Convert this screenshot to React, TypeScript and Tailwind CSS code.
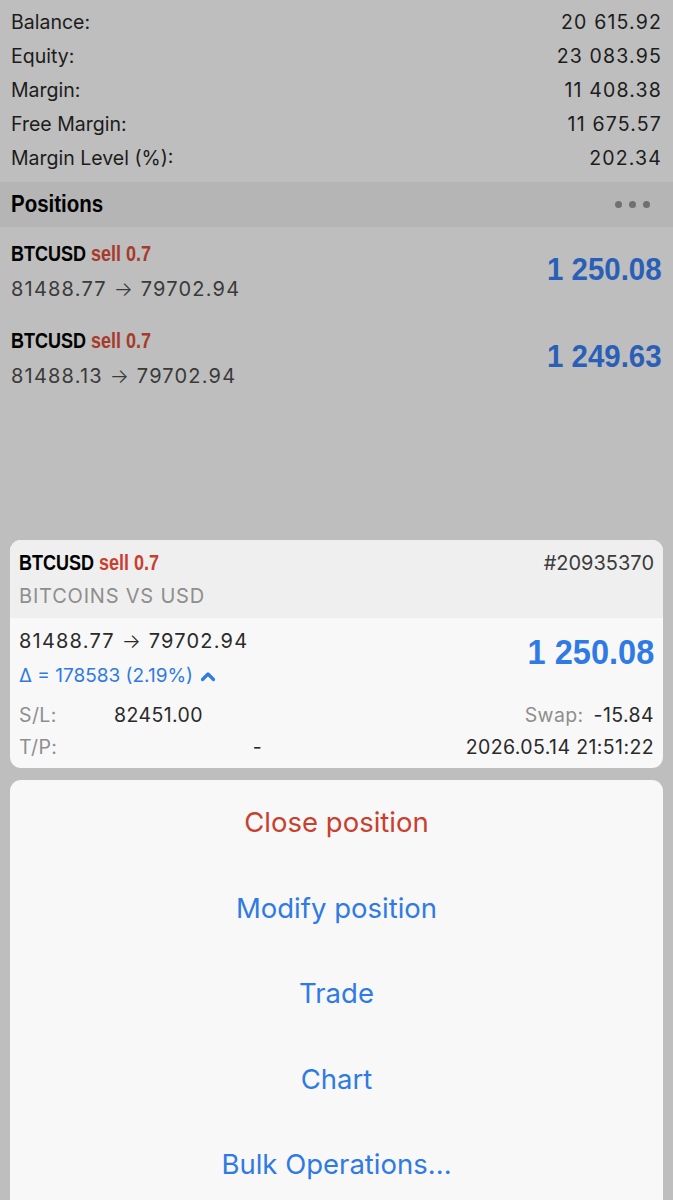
const bold = "font-['Liberation_Sans',Arial,sans-serif] font-bold";
const body = "font-['Inter','Liberation_Sans',sans-serif]";

const account = [
  ["Balance:", "20 615.92"],
  ["Equity:", "23 083.95"],
  ["Margin:", "11 408.38"],
  ["Free Margin:", "11 675.57"],
  ["Margin Level (%):", "202.34"],
];

const positions = [
  { open: "81488.77", profit: "1 250.08" },
  { open: "81488.13", profit: "1 249.63" },
];

const actions = ["Close position", "Modify position", "Trade", "Chart", "Bulk Operations..."];

function Symbol({ sell }: { sell: string }) {
  return (
    <div className={`${bold} inline-block origin-left scale-x-[0.8] whitespace-nowrap text-[22.5px] leading-[26px]`}>
      <span className="text-black">BTCUSD</span> <span className={sell}>sell 0.7</span>
    </div>
  );
}

function Prices({ open, color }: { open: string; color: string }) {
  return (
    <div className={`h-[26px] text-[20px] leading-[26px] tracking-[0.06em] ${color}`}>
      {open} <span className="font-light">→</span> 79702.94
    </div>
  );
}

export default function App() {
  return (
    <div className={`h-[1200px] w-[673px] overflow-hidden bg-[#bebebe] ${body}`}>
      <div className="px-[11px] pt-[6px] pb-[6px]">
        {account.map(([label, value]) => (
          <div key={label} className="flex h-[34px] items-center justify-between text-[19.5px] text-[#1c1c1c]">
            <span>{label}</span>
            <span className="tracking-[0.06em]">{value}</span>
          </div>
        ))}
      </div>

      <div className="flex h-[45px] items-center justify-between bg-[#b5b5b5] px-[11px]">
        <span className={`${bold} inline-block origin-left scale-x-[0.89] text-[23px] text-black`}>Positions</span>
        <div className="mr-[12px] flex gap-[7px]">
          <span className="h-[7px] w-[7px] rounded-full bg-[#707070]" />
          <span className="h-[7px] w-[7px] rounded-full bg-[#707070]" />
          <span className="h-[7px] w-[7px] rounded-full bg-[#707070]" />
        </div>
      </div>

      <div className="px-[11px] pt-[14px]">
        {positions.map((p) => (
          <div key={p.open} className="flex h-[87px] items-start justify-between">
            <div className="flex flex-col">
              <Symbol sell="text-[#a63a2b]" />
              <div className="mt-[9px]">
                <Prices open={p.open} color="text-[#3a3a3a]" />
              </div>
            </div>
            <div className={`${bold} inline-block origin-right scale-x-[0.92] pt-[12px] text-[32px] leading-none text-[#2a5fb8]`}>
              {p.profit}
            </div>
          </div>
        ))}
      </div>

      <div className="mx-[10px] mt-[125px] overflow-hidden rounded-[11px] bg-[#f8f8f8]">
        <div className="h-[78px] bg-[#efefef] px-[9px] pt-[10px]">
          <div className="flex h-[26px] items-center justify-between">
            <Symbol sell="text-[#c9402f]" />
            <span className="text-[20px] text-[#3c3c3c]">#20935370</span>
          </div>
          <div className="mt-[7px] h-[26px] text-[20px] leading-[26px] tracking-[0.04em] text-[#8e8e8e]">BITCOINS VS USD</div>
        </div>
        <div className="px-[9px] pt-[10px] pb-[7px]">
          <div className="flex items-start justify-between">
            <div>
              <Prices open="81488.77" color="text-[#2a2a2a]" />
              <div className="mt-[9px] flex h-[26px] items-center gap-[7px] text-[19px] text-[#2f7ae5]">
                <span>Δ = 178583 (2.19%)</span>
                <svg width="16" height="12" viewBox="0 0 16 12" fill="none">
                  <path d="M2.5 9.5 L8 4 L13.5 9.5" stroke="#2f7ae5" strokeWidth="3.2" strokeLinecap="round" strokeLinejoin="round" />
                </svg>
              </div>
            </div>
            <div className={`${bold} inline-block origin-right scale-x-[0.93] pt-[6px] text-[35px] leading-none text-[#2f7ae5]`}>
              1 250.08
            </div>
          </div>
          <div className="mt-[14px] flex h-[26px] items-center text-[19.5px] tracking-[0.02em]">
            <span className="w-[60px] text-[#8e8e8e]">S/L:</span>
            <span className="w-[124px] text-right text-[#2a2a2a]">82451.00</span>
            <span className="flex-1 text-right">
              <span className="text-[#8e8e8e]">Swap:</span>
              <span className="ml-[10px] text-[#2a2a2a]">-15.84</span>
            </span>
          </div>
          <div className="mt-[6px] flex h-[26px] items-center text-[19.5px] tracking-[0.02em]">
            <span className="w-[60px] text-[#8e8e8e]">T/P:</span>
            <span className="w-[183px] text-right text-[#2a2a2a]">-</span>
            <span className="flex-1 text-right text-[#2a2a2a]">2026.05.14 21:51:22</span>
          </div>
        </div>
      </div>

      <div className="mx-[10px] mt-[12px] h-[440px] rounded-t-[11px] bg-[#f8f8f8]">
        {actions.map((a, i) => (
          <div
            key={a}
            className={`flex h-[85.5px] items-center justify-center text-[27.5px] ${i === 0 ? "text-[#c9402f]" : "text-[#2f7ae5]"}`}
          >
            {a}
          </div>
        ))}
      </div>
    </div>
  );
}
